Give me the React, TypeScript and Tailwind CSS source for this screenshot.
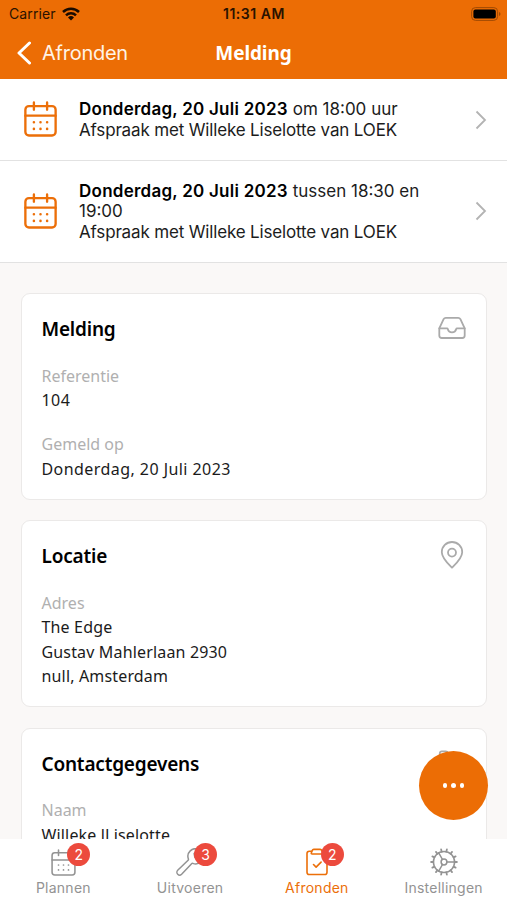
import type { ReactNode } from 'react';

const appointments = [
  { date: 'Donderdag, 20 Juli 2023', time: 'om 18:00 uur', text: 'Afspraak met Willeke Liselotte van LOEK' },
  { date: 'Donderdag, 20 Juli 2023', time: 'tussen 18:30 en 19:00', text: 'Afspraak met Willeke Liselotte van LOEK' },
];

function CalendarIcon({ className, stroke = 1.5 }: { className: string; stroke?: number }) {
  return (
    <svg viewBox="0 0 24 26" className={className} fill="none" stroke="currentColor" strokeWidth={stroke} strokeLinecap="round">
      <rect x="1" y="3.6" width="22" height="21.4" rx="2.6" />
      <path d="M1 10.6h22M7.2 1v5.2M16.8 1v5.2" />
      <path d="M7.2 15.4h.01M12 15.4h.01M16.8 15.4h.01M7.2 20.2h.01M12 20.2h.01M16.8 20.2h.01" strokeWidth={stroke * 1.1} />
    </svg>
  );
}

function InboxIcon() {
  return (
    <svg viewBox="0 0 28 24" className="mt-px h-6 w-7" fill="none" stroke="currentColor" strokeWidth="1.8" strokeLinejoin="round" strokeLinecap="round">
      <path d="M1.3 12.3 5.6 3.2Q6.300 1.800 7.800 1.800h12.400q1.500 0 2.200 1.400l4.300 9.100v7.200q0 2.500-2.500 2.500H3.800q-2.500 0-2.500-2.500z" />
      <path d="M1.300 12.300h7.700q.6 0 .8.700a4.300 4.300 0 0 0 8.400 0q.2-.7.8-.7h7.700" />
    </svg>
  );
}

function PinIcon() {
  return (
    <svg viewBox="0 0 28 28" className="-mt-px size-7" fill="none" stroke="currentColor" strokeWidth="1.8" strokeLinejoin="round">
      <path d="M14 26.700C9.500 22.300 3.800 17 3.800 11.200a10.200 10.200 0 0 1 20.400 0C24.200 17 18.500 22.300 14 26.700z" />
      <circle cx="14" cy="11.600" r="4" />
    </svg>
  );
}

function FolderIcon() {
  return (
    <svg viewBox="0 0 28 24" className="h-6 w-7" fill="none" stroke="currentColor" strokeWidth="1.8" strokeLinejoin="round">
      <path d="M1.800 20V3.300q0-2 2-2h4q1.600 0 1.900 1.500l.8 4.500h14q2.200 0 2.200 2.200V20q0 2-2 2H3.800q-2 0-2-2z" />
    </svg>
  );
}

function WrenchIcon() {
  return (
    <svg viewBox="0 0 28 28" className="size-7" fill="none" stroke="currentColor" strokeWidth="1.500" strokeLinejoin="round">
      <path d="M22.400 1.300a7.600 7.600 0 0 0-10 9.700q.2.700-.3 1.200L1.700 22.300a2.600 2.600 0 0 0 3.900 3.900l10-10.500q.5-.5 1.200-.3a7.600 7.600 0 0 0 9.900-9.700l-4.300 4.200-3.600-.7-.7-3.600z" />
    </svg>
  );
}

function ClipboardIcon() {
  return (
    <svg viewBox="0 0 24 28" className="h-7 w-6" fill="none" stroke="currentColor" strokeWidth="1.600" strokeLinejoin="round" strokeLinecap="round">
      <path d="M6.600 3.200H4.300Q2 3.200 2 5.500v18.700q0 2.300 2.300 2.300h15.400q2.300 0 2.300-2.300V5.500q0-2.300-2.300-2.300h-2.300" />
      <path d="M8.800 1.400h6.400q1.200 0 1.600 1.100l.9 2.600q.2.900-.8.900H7.100q-1 0-.8-.9l.9-2.600q.4-1.100 1.600-1.100z" />
      <path d="m8.500 16.500 2.600 2.600 5-5" />
    </svg>
  );
}

function GearIcon() {
  const teeth = Array.from({ length: 14 }, (_, i) => 90 + (i * 360) / 14);
  return (
    <svg viewBox="0 0 28 28" className="size-7" fill="none" stroke="currentColor" strokeWidth="1.500" strokeLinecap="round">
      <circle cx="14" cy="14" r="10.600" />
      <circle cx="14" cy="14" r="2.900" />
      <path d="M16.900 14h7.700M12.500 11.500 8.700 4.800M12.500 16.500l-3.800 6.700" />
      {teeth.map((angle) => (
        <path key={angle} d="M14 3.400V1.100" strokeWidth="1.800" transform={`rotate(${angle} 14 14)`} />
      ))}
    </svg>
  );
}

function Card({ title, icon, children }: { title: string; icon: ReactNode; children: ReactNode }) {
  return (
    <section className="rounded-[9px] border-[1.500px] border-[#ebe9e8] bg-white pt-[21px] pr-[19px] pb-[17.500px] pl-5 font-['Noto_Sans','Open_Sans',sans-serif]">
      <div className="flex justify-between">
        <h2 className="text-[19px] leading-[28px] font-semibold tracking-[-0.2px] text-black">{title}</h2>
        <div className="mr-px h-7 text-[#aaaaaa]">{icon}</div>
      </div>
      <div className="mt-[20.500px] space-y-[19.500px]">{children}</div>
    </section>
  );
}

function Field({ label, lines, wide }: { label: string; lines: string[]; wide?: boolean }) {
  return (
    <div className="text-[16px] leading-[24.500px]">
      <div className="text-[#b0b0b0]">{label}</div>
      {lines.map((line) => (
        <div key={line} className={`text-[#1b1b1b] ${wide ? 'tracking-[0.440px]' : 'tracking-[0.160px]'}`}>{line}</div>
      ))}
    </div>
  );
}

function Tab({ label, icon, badge, active }: { label: string; icon: ReactNode; badge?: number; active?: boolean }) {
  return (
    <div className={`flex flex-1 flex-col items-center pt-[9px] ${active ? 'text-[#ec6f09]' : 'text-[#939393]'}`}>
      <div className="relative flex size-7 items-center justify-center">
        {icon}
        {badge && (
          <span className="absolute -top-[5px] left-[18px] flex size-[23px] items-center justify-center rounded-full bg-[#ec4a3d] text-[14px] text-white">
            {badge}
          </span>
        )}
      </div>
      <span className="mt-[4px] text-[14px] leading-[16px] tracking-[0.250px]">{label}</span>
    </div>
  );
}

export default function App() {
  return (
    <div className="relative flex h-[900px] w-[507px] flex-col overflow-hidden bg-[#faf8f7] font-['Inter',sans-serif]">
      <header className="h-[79px] shrink-0 bg-[#ec6d05]">
        {/* Status bar */}
        <div className="grid h-[27px] grid-cols-3 items-center pr-[6px] pl-[9px] text-[14px] text-[#2a1200]">
          <div className="flex items-center gap-[6px]">
            <span className="tracking-[0.1px]">Carrier</span>
            <svg viewBox="0 0 18 14" className="h-[14px] w-[18px]" fill="none" stroke="#1a0b00" strokeWidth="2.500">
              <path d="M1 5a11.500 11.500 0 0 1 16 0M4 8.300a7.200 7.200 0 0 1 10 0" />
              <path d="M9 13.500 6 10.400a4.300 4.300 0 0 1 6 0z" fill="#1a0b00" stroke="none" />
            </svg>
          </div>
          <span className="-ml-[2px] text-center font-semibold tracking-[0.550px]">11:31 AM</span>
          <svg viewBox="0 0 30 14" className="h-[14px] w-[30px] justify-self-end">
            <rect x=".6" y=".6" width="26" height="12.800" rx="3.800" fill="none" stroke="#a04a04" strokeWidth="1" />
            <rect x="2.400" y="2.400" width="22.400" height="9.200" rx="2" fill="#000" />
            <path d="M28 5v4q1.500-.6 1.500-2T28 5z" fill="#a04a04" />
          </svg>
        </div>

        {/* Navigation bar */}
        <div className="grid h-[52px] grid-cols-3 items-center pl-[17px] text-[#fff3e6]">
          <div className="flex items-center gap-[11px]">
            <svg viewBox="0 0 14 24" className="h-6 w-[14px]" fill="none" stroke="#fff" strokeWidth="3" strokeLinecap="round" strokeLinejoin="round">
              <path d="M12.500 2 2 12l10.500 10" />
            </svg>
            <span className="text-[20px] tracking-[-0.250px]">Afronden</span>
          </div>
          <h1 className="-ml-[17px] text-center font-['Noto_Sans','Open_Sans',sans-serif] text-[19px] font-bold tracking-[-0.1px] text-white">Melding</h1>
        </div>
      </header>

      {/* Appointments */}
      <div className="shrink-0 bg-white">
        {appointments.map((item) => (
          <div key={item.time} className="flex items-center border-b border-[#e2e2e2] pt-[20px] pr-[20px] pb-[19.500px] pl-[23.500px] text-[17px] leading-[20.500px] text-[#1c1c1c]">
            <CalendarIcon className="mb-px h-[36px] w-[33px] shrink-0 text-[#ec6f09]" stroke={1.7} />
            <div className="ml-[22.500px] w-[360px]">
              <div><span className="font-semibold tracking-[0.250px] text-black">{item.date}</span> {item.time}</div>
              <div className="tracking-[-0.160px]">{item.text}</div>
            </div>
            <svg viewBox="0 0 12 20" className="ml-auto h-[20px] w-[12px]" fill="none" stroke="#b3b3b3" strokeWidth="1.800">
              <path d="m1.500 1.500 8.500 8.500-8.500 8.500" />
            </svg>
          </div>
        ))}
      </div>

      {/* Detail cards */}
      <main className="min-h-0 flex-1 overflow-hidden px-[20.500px] pt-[30.500px]">
        <div className="space-y-[20.500px]">
          <Card title="Melding" icon={<InboxIcon />}>
            <Field label="Referentie" lines={['104']} wide />
            <Field label="Gemeld op" lines={['Donderdag, 20 Juli 2023']} wide />
          </Card>
          <Card title="Locatie" icon={<PinIcon />}>
            <Field label="Adres" lines={['The Edge', 'Gustav Mahlerlaan 2930', 'null, Amsterdam']} />
          </Card>
          <Card title="Contactgegevens" icon={<FolderIcon />}>
            <Field label="Naam" lines={['Willeke lLiselotte']} />
          </Card>
        </div>
      </main>

      <button className="absolute top-[751px] left-[419px] flex size-[69px] items-center justify-center gap-[4px] rounded-full bg-[#ec6d05]">
        <span className="size-[4.500px] rounded-full bg-white" />
        <span className="size-[4.500px] rounded-full bg-white" />
        <span className="size-[4.500px] rounded-full bg-white" />
      </button>

      {/* Tab bar */}
      <nav className="flex h-[61px] shrink-0 bg-white">
        <Tab label="Plannen" icon={<CalendarIcon className="h-[27px] w-[25px]" />} badge={2} />
        <Tab label="Uitvoeren" icon={<WrenchIcon />} badge={3} />
        <Tab label="Afronden" icon={<ClipboardIcon />} badge={2} active />
        <Tab label="Instellingen" icon={<GearIcon />} />
      </nav>
    </div>
  );
}
